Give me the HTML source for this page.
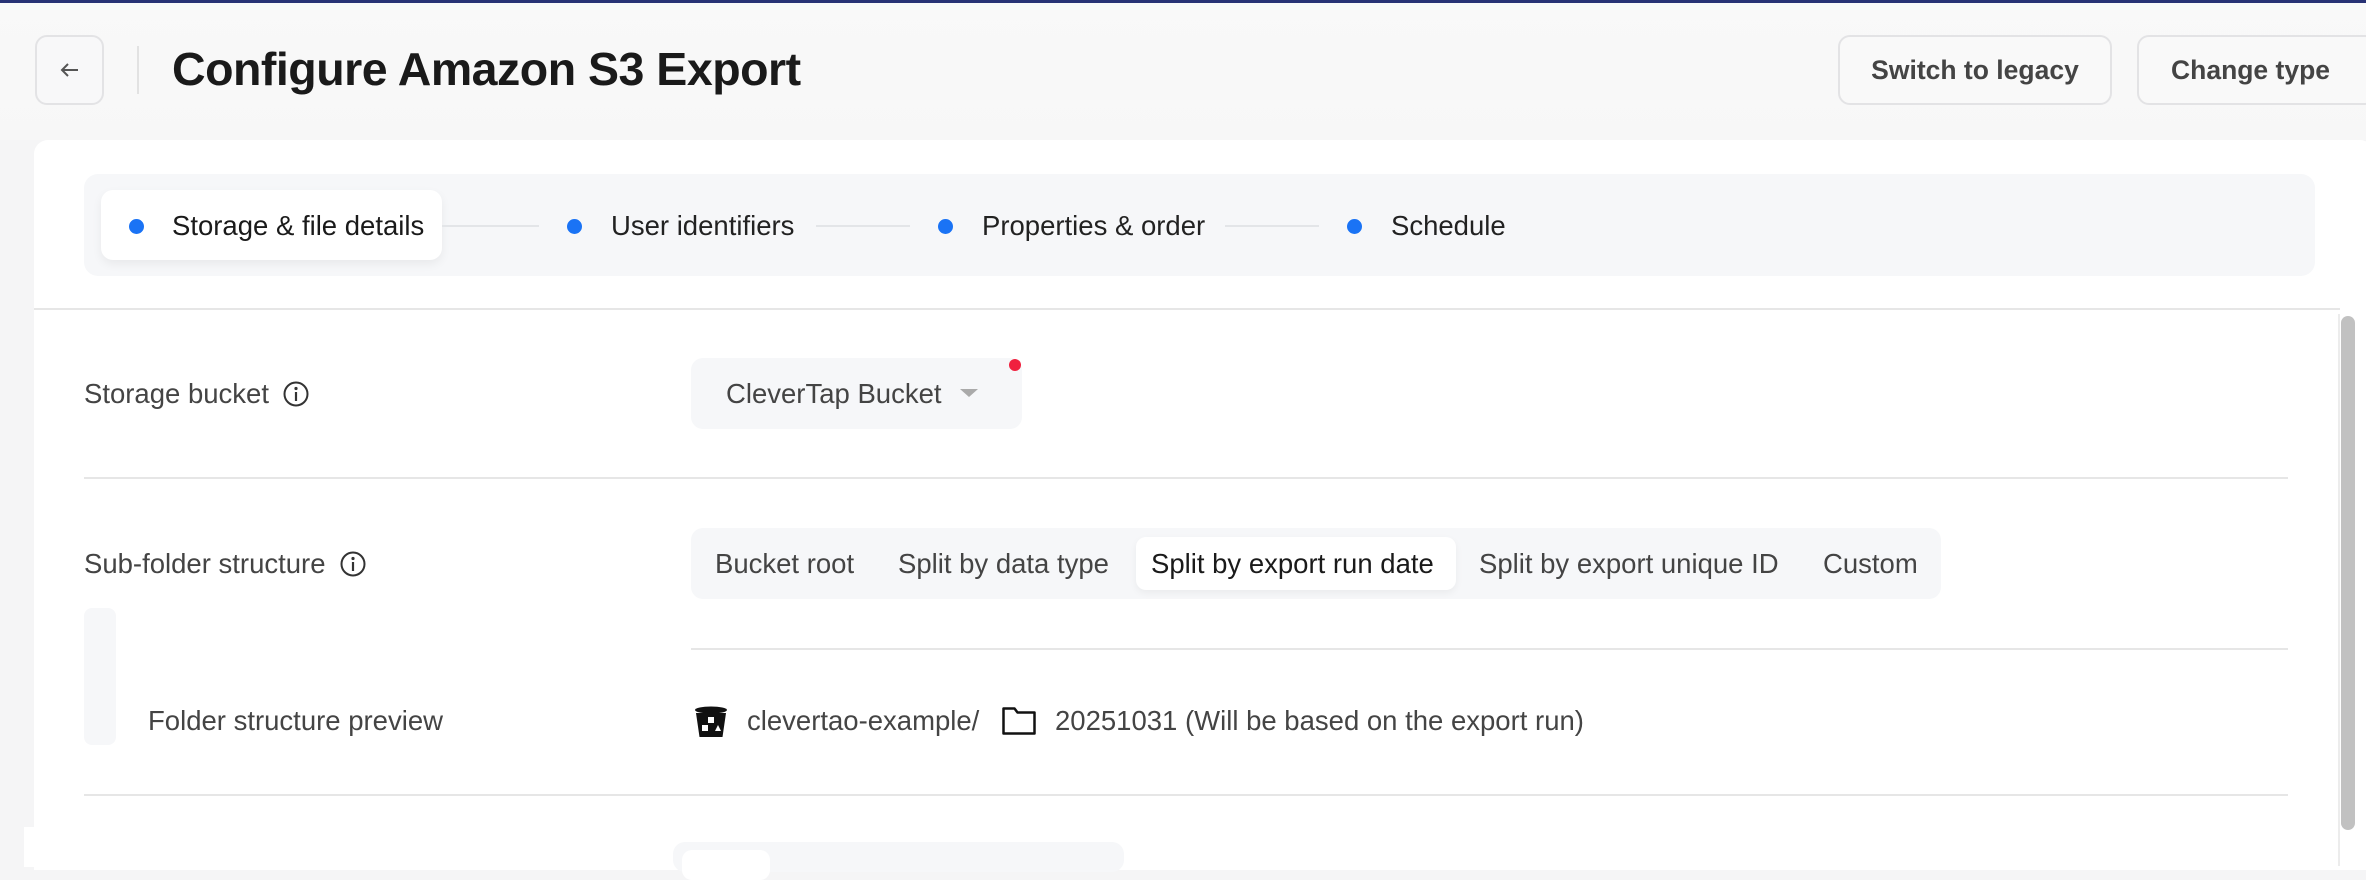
<!DOCTYPE html>
<html><head><meta charset="utf-8"><style>
*{margin:0;padding:0;box-sizing:border-box}
body{width:2366px;height:866px;overflow:hidden;background:#f5f5f6;font-family:"Liberation Sans",Arial,sans-serif;position:relative;color:#444}
.a{position:absolute;white-space:nowrap}
.t{font-size:27.5px;line-height:30px}
.hr{position:absolute;height:2px;background:#e6e6e6}
.dot{position:absolute;width:15px;height:15px;border-radius:50%;background:#1a73f5}
.ln{position:absolute;height:2px;background:#e3e5e8}
</style></head><body>
<div class="a" style="left:0;top:0;width:2366px;height:3px;background:#283275"></div>
<div class="a" style="left:0;top:3px;width:2366px;height:137px;background:linear-gradient(#f9f9f9,#f7f7f7)"></div>
<div class="a" style="left:35px;top:35px;width:69px;height:70px;border:2px solid #e3e3e5;border-radius:12px;background:#f8f8f9"></div>
<svg class="a" style="left:59px;top:60px" width="22" height="20" viewBox="0 0 22 20"><path d="M19 10H3M9 4L3 10l6 6" stroke="#555" stroke-width="2" fill="none"/></svg>
<div class="a" style="left:137px;top:46px;width:2px;height:48px;background:#e2e2e2"></div>
<div class="a" style="left:172px;top:42px;font-size:46.5px;line-height:54px;font-weight:bold;color:#1a1a1a;letter-spacing:-0.5px">Configure Amazon S3 Export</div>
<div class="a" style="left:1838px;top:35px;width:274px;height:70px;border:2px solid #e3e3e5;border-radius:12px;background:#f9f9f9;font-size:26.5px;font-weight:bold;line-height:66px;text-align:center;color:#444">Switch to legacy</div>
<div class="a" style="left:2137px;top:35px;width:240px;height:70px;border:2px solid #e3e3e5;border-radius:12px;background:#f9f9f9;font-size:26.5px;font-weight:bold;line-height:66px;padding-left:32px;color:#444">Change type</div>
<div class="a" style="left:34px;top:140px;width:2340px;height:730px;background:#fff;border-radius:14px 14px 0 0"></div>
<div class="a" style="left:84px;top:174px;width:2231px;height:102px;background:#f6f7f9;border-radius:14px"></div>
<div class="a" style="left:101px;top:190px;width:341px;height:70px;background:#fff;border-radius:12px;box-shadow:0 4px 10px rgba(0,0,0,0.06)"></div>
<div class="dot" style="left:129px;top:219px"></div>
<div class="a t" style="left:172px;top:211px;color:#1a1a1a">Storage &amp; file details</div>
<div class="ln" style="left:442px;top:225px;width:97px"></div>
<div class="dot" style="left:567px;top:219px"></div>
<div class="a t" style="left:611px;top:211px;color:#222">User identifiers</div>
<div class="ln" style="left:816px;top:225px;width:94px"></div>
<div class="dot" style="left:938px;top:219px"></div>
<div class="a t" style="left:982px;top:211px;color:#222">Properties &amp; order</div>
<div class="ln" style="left:1225px;top:225px;width:94px"></div>
<div class="dot" style="left:1347px;top:219px"></div>
<div class="a t" style="left:1391px;top:211px;color:#222">Schedule</div>
<div class="hr" style="left:34px;top:308px;width:2306px"></div>
<div class="a" style="left:2338px;top:314px;width:2px;height:552px;background:#ececec"></div>
<div class="a" style="left:2341px;top:316px;width:14px;height:514px;background:#c1c1c1;border-radius:7px"></div>
<div class="a t" style="left:84px;top:379px">Storage bucket</div>
<svg class="a" style="left:282px;top:380px" width="28" height="28" viewBox="0 0 28 28"><circle cx="14" cy="14" r="11.5" stroke="#333" stroke-width="2" fill="none"/><circle cx="14" cy="8.5" r="1.6" fill="#333"/><path d="M14 12v9" stroke="#333" stroke-width="2.2"/></svg>
<div class="a" style="left:691px;top:358px;width:331px;height:71px;background:#f6f7f9;border-radius:12px"></div>
<div class="a t" style="left:726px;top:379px">CleverTap Bucket</div>
<svg class="a" style="left:960px;top:388px" width="18" height="10"><path d="M0 1h18L9 9z" fill="#aaa"/></svg>
<div class="a" style="left:1009px;top:359px;width:12px;height:12px;border-radius:50%;background:#f0213f"></div>
<div class="hr" style="left:84px;top:477px;width:2204px"></div>
<div class="a t" style="left:84px;top:549px">Sub-folder structure</div>
<svg class="a" style="left:339px;top:550px" width="28" height="28" viewBox="0 0 28 28"><circle cx="14" cy="14" r="11.5" stroke="#333" stroke-width="2" fill="none"/><circle cx="14" cy="8.5" r="1.6" fill="#333"/><path d="M14 12v9" stroke="#333" stroke-width="2.2"/></svg>
<div class="a" style="left:691px;top:528px;width:1250px;height:71px;background:#f6f7f9;border-radius:12px"></div>
<div class="a" style="left:1136px;top:537px;width:320px;height:53px;background:#fff;border-radius:10px;box-shadow:0 3px 8px rgba(0,0,0,0.05)"></div>
<div class="a t" style="left:715px;top:549px">Bucket root</div>
<div class="a t" style="left:898px;top:549px">Split by data type</div>
<div class="a t" style="left:1151px;top:549px;color:#1a1a1a">Split by export run date</div>
<div class="a t" style="left:1479px;top:549px">Split by export unique ID</div>
<div class="a t" style="left:1823px;top:549px">Custom</div>
<div class="hr" style="left:691px;top:648px;width:1597px"></div>
<div class="a" style="left:84px;top:608px;width:32px;height:137px;background:#f6f7f9;border-radius:8px"></div>
<div class="a t" style="left:148px;top:706px">Folder structure preview</div>
<svg class="a" style="left:694px;top:706px" width="34" height="32" viewBox="0 0 34 32"><ellipse cx="17" cy="4" rx="16" ry="3.5" fill="#111"/><path d="M2 7h30l-3.5 24h-23z" fill="#111"/><rect x="8" y="19" width="6" height="6" fill="#fff"/><rect x="14" y="11" width="6" height="6" fill="#fff"/><path d="M21 25l3-6 3 6z" fill="#fff"/></svg>
<div class="a t" style="left:747px;top:706px">clevertao-example/</div>
<svg class="a" style="left:1002px;top:707px" width="34" height="28" viewBox="0 0 34 28"><path d="M1.5 1.5h11l3 4h17v21h-31z" stroke="#111" stroke-width="2.5" fill="none" stroke-linejoin="round"/></svg>
<div class="a t" style="left:1055px;top:706px">20251031 (Will be based on the export run)</div>
<div class="hr" style="left:84px;top:794px;width:2204px"></div>
<div class="a" style="left:24px;top:827px;width:2314px;height:40px;background:#fff"></div>
<div class="a" style="left:673px;top:842px;width:451px;height:30px;background:#f6f7f9;border-radius:12px"></div>
<div class="a" style="left:682px;top:850px;width:88px;height:30px;background:#fff;border-radius:10px"></div>
</body></html>
